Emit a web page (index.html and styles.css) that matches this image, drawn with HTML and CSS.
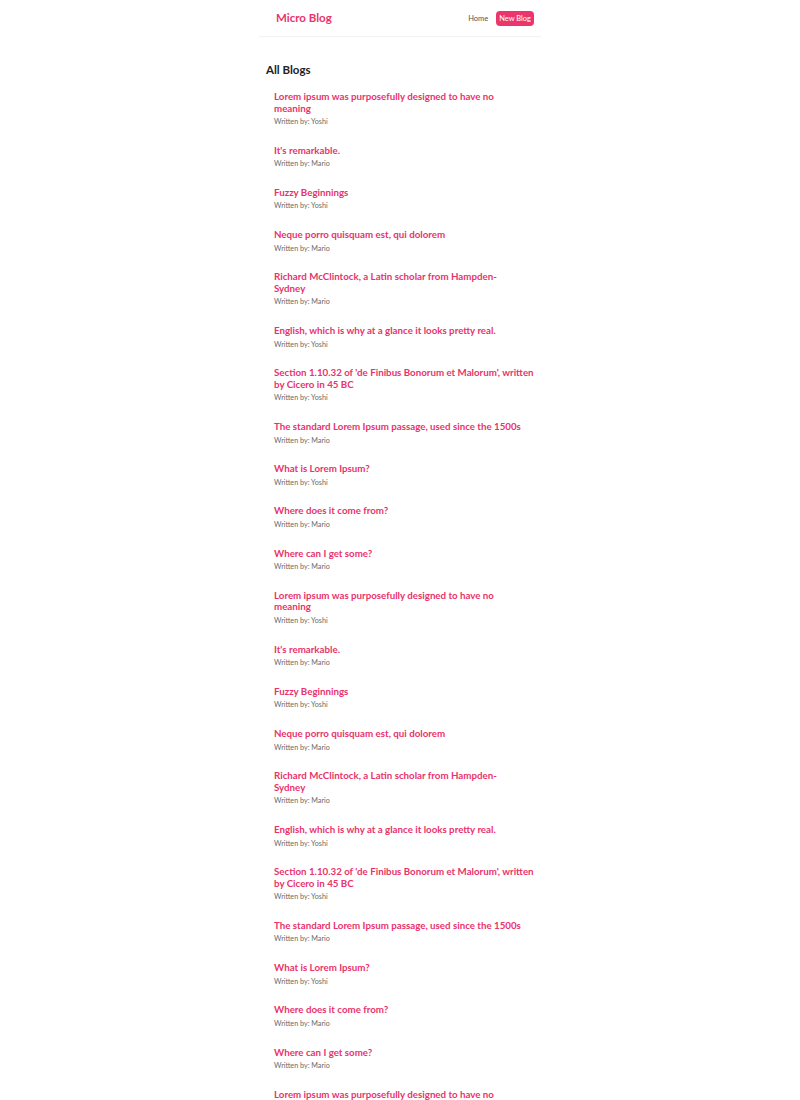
FILE: index.html
```
<!DOCTYPE html>
<html lang="en">
<head>
<meta charset="utf-8">
<title>Micro Blog</title>
<link rel="stylesheet" href="styles.css">
</head>
<body>
<nav class="navbar">
  <h1 class="brand">Micro Blog</h1>
  <div class="links">
    <a href="#" class="link">Home</a>
    <a href="#" class="link link-new">New Blog</a>
  </div>
</nav>
<main class="content">
  <h2 class="heading">All Blogs</h2>
  <div class="blog-list">
    <div class="blog-preview"><h2 class="title">Lorem ipsum was purposefully designed to have no<br>meaning</h2><p class="author">Written by: Yoshi</p></div>
    <div class="blog-preview"><h2 class="title">It's remarkable.</h2><p class="author">Written by: Mario</p></div>
    <div class="blog-preview"><h2 class="title">Fuzzy Beginnings</h2><p class="author">Written by: Yoshi</p></div>
    <div class="blog-preview"><h2 class="title">Neque porro quisquam est, qui dolorem</h2><p class="author">Written by: Mario</p></div>
    <div class="blog-preview"><h2 class="title">Richard McClintock, a Latin scholar from Hampden-<br>Sydney</h2><p class="author">Written by: Mario</p></div>
    <div class="blog-preview"><h2 class="title">English, which is why at a glance it looks pretty real.</h2><p class="author">Written by: Yoshi</p></div>
    <div class="blog-preview"><h2 class="title">Section 1.10.32 of 'de Finibus Bonorum et Malorum', written by Cicero in 45 BC</h2><p class="author">Written by: Yoshi</p></div>
    <div class="blog-preview"><h2 class="title">The standard Lorem Ipsum passage, used since the 1500s</h2><p class="author">Written by: Mario</p></div>
    <div class="blog-preview"><h2 class="title">What is Lorem Ipsum?</h2><p class="author">Written by: Yoshi</p></div>
    <div class="blog-preview"><h2 class="title">Where does it come from?</h2><p class="author">Written by: Mario</p></div>
    <div class="blog-preview"><h2 class="title">Where can I get some?</h2><p class="author">Written by: Mario</p></div>
    <div class="blog-preview"><h2 class="title">Lorem ipsum was purposefully designed to have no<br>meaning</h2><p class="author">Written by: Yoshi</p></div>
    <div class="blog-preview"><h2 class="title">It's remarkable.</h2><p class="author">Written by: Mario</p></div>
    <div class="blog-preview"><h2 class="title">Fuzzy Beginnings</h2><p class="author">Written by: Yoshi</p></div>
    <div class="blog-preview"><h2 class="title">Neque porro quisquam est, qui dolorem</h2><p class="author">Written by: Mario</p></div>
    <div class="blog-preview"><h2 class="title">Richard McClintock, a Latin scholar from Hampden-<br>Sydney</h2><p class="author">Written by: Mario</p></div>
    <div class="blog-preview"><h2 class="title">English, which is why at a glance it looks pretty real.</h2><p class="author">Written by: Yoshi</p></div>
    <div class="blog-preview"><h2 class="title">Section 1.10.32 of 'de Finibus Bonorum et Malorum', written by Cicero in 45 BC</h2><p class="author">Written by: Yoshi</p></div>
    <div class="blog-preview"><h2 class="title">The standard Lorem Ipsum passage, used since the 1500s</h2><p class="author">Written by: Mario</p></div>
    <div class="blog-preview"><h2 class="title">What is Lorem Ipsum?</h2><p class="author">Written by: Yoshi</p></div>
    <div class="blog-preview"><h2 class="title">Where does it come from?</h2><p class="author">Written by: Mario</p></div>
    <div class="blog-preview"><h2 class="title">Where can I get some?</h2><p class="author">Written by: Mario</p></div>
    <div class="blog-preview"><h2 class="title">Lorem ipsum was purposefully designed to have no<br>meaning</h2><p class="author">Written by: Yoshi</p></div>
    <div class="blog-preview"><h2 class="title">It's remarkable.</h2><p class="author">Written by: Mario</p></div>
  </div>
</main>
</body>
</html>
```
FILE: styles.css
```
* {
  margin: 0;
  padding: 0;
  box-sizing: border-box;
}

body {
  font-family: Lato, "Open Sans", sans-serif;
  color: #333;
  background: #fff;
}

.navbar {
  width: 282px;
  height: 37px;
  margin: 0 auto;
  padding: 0 7px 0 17px;
  display: flex;
  align-items: center;
  border-bottom: 1px solid #f2f2f2;
}

.brand {
  font-size: 11.5px;
  font-weight: 700;
  color: #e9336c;
  line-height: 16px;
}

.links {
  margin-left: auto;
  display: flex;
  align-items: center;
  gap: 8px;
}

.link {
  font-size: 7.5px;
  color: #555;
  text-decoration: none;
  line-height: 9px;
}

.link-new {
  color: #fff;
  background: #ec356d;
  border-radius: 4px;
  padding: 3px 3px;
  height: 15px;
  display: flex;
  align-items: center;
}

.content {
  width: 282px;
  margin: 0 auto;
  padding: 26px 0 40px 7px;
}

.heading {
  font-size: 11.5px;
  font-weight: 700;
  line-height: 14px;
  color: #222;
}

.blog-list {
  margin-top: 14px;
  display: flex;
  flex-direction: column;
  gap: 17.73px;
  padding: 0 0 0 8px;
}

.blog-preview {
  display: flex;
  flex-direction: column;
  gap: 3px;
}

.title {
  font-size: 9.74px;
  font-weight: 700;
  line-height: 11.5px;
  color: #e9336c;
}

.author {
  font-size: 7.2px;
  line-height: 10px;
  color: #6a6a6a;
}
```
